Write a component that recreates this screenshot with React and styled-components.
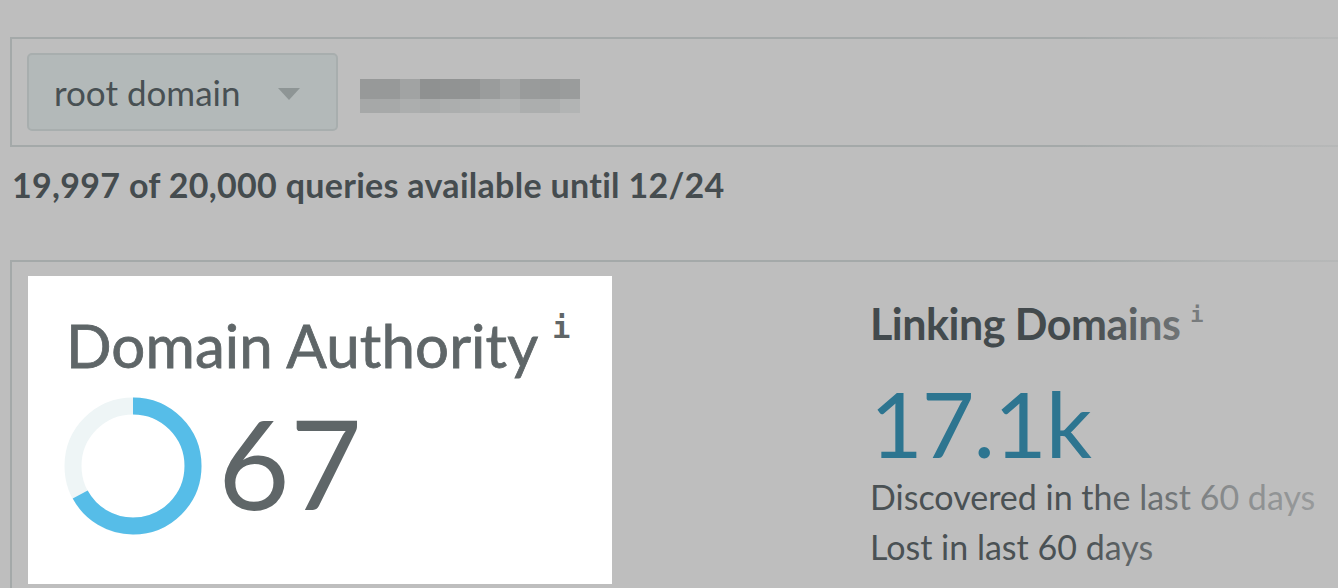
import React from 'react';
import styled, { createGlobalStyle } from 'styled-components';

const GlobalStyle = createGlobalStyle`
  html, body {
    margin: 0;
    padding: 0;
    background: #bebebe;
    overflow: hidden;
  }
  body {
    font-family: Lato, "Open Sans", sans-serif;
    color: #464d50;
  }
`;

const Page = styled.div`
  position: relative;
  width: 1338px;
  height: 588px;
  padding: 37px 0 0 10px;
  box-sizing: border-box;
  overflow: hidden;
`;

const SearchBar = styled.div`
  display: flex;
  align-items: center;
  gap: 22px;
  height: 110px;
  box-sizing: border-box;
  margin-right: -20px;
  padding: 0 15px;
  border: 2px solid #a4a9a9;
`;

const Dropdown = styled.div`
  display: flex;
  align-items: center;
  justify-content: space-between;
  width: 311px;
  height: 78px;
  box-sizing: border-box;
  padding: 0 36px 0 25px;
  background: #b3b9b9;
  border: 2px solid #a8aeae;
  border-radius: 5px;
  font-size: 35px;
  color: #485053;
`;

const Caret = styled.span`
  width: 0;
  height: 0;
  border-left: 11px solid transparent;
  border-right: 11px solid transparent;
  border-top: 12px solid #8e9595;
  margin-top: 4px;
`;

const Redacted = styled.div`
  display: grid;
  grid-template-columns: repeat(11, 20px);
  grid-template-rows: 20px 14px;
  margin-top: 8px;
`;

const Pixel = styled.span`
  background: ${p => p.$c};
`;

const QueryInfo = styled.p`
  margin: 18px 0 0 2px;
  font-size: 34px;
  font-weight: 700;
  letter-spacing: 0.3px;
  color: #454c4f;
  line-height: 40px;
`;

const Metrics = styled.div`
  display: grid;
  grid-template-columns: 584px 1fr;
  align-items: start;
  column-gap: 258px;
  margin-top: 55px;
  margin-right: -20px;
  padding: 14px 0 0 16px;
  height: 400px;
  border-top: 2px solid #a4a9a9;
  border-left: 2px solid #a4a9a9;
`;

const Card = styled.div`
  background: #ffffff;
  height: 308px;
  padding: 37px 0 0 38px;
  box-sizing: border-box;
  color: #5f6668;
`;

const Title = styled.h2`
  margin: 0;
  font-weight: ${p => (p.$bold ? 700 : 400)};
  font-size: ${p => p.$size}px;
  line-height: 1;
  letter-spacing: ${p => (p.$bold ? '-0.5px' : '0.1px')};
  -webkit-text-stroke: ${p => (p.$bold ? '0' : '0.8px')};
  white-space: nowrap;
`;

const Info = styled.sup`
  font-family: "DejaVu Sans Mono", monospace;
  font-weight: 700;
  font-size: ${p => p.$size}px;
  margin-left: ${p => p.$gap}px;
  vertical-align: ${p => p.$lift}px;
  -webkit-text-stroke: 0;
`;

const ScoreRow = styled.div`
  display: flex;
  align-items: center;
  gap: 16px;
  margin-top: 22px;
  margin-left: -2px;
`;

const Score = styled.span`
  font-size: 124px;
  line-height: 1;
  font-weight: 400;
  color: #5f6668;
  margin-top: -8px;
`;

const Side = styled.div`
  padding-top: 26px;
  color: #434a4d;
`;

const BigNumber = styled.div`
  margin-top: 32px;
  font-size: 91px;
  line-height: 1;
  color: #2d7590;
  letter-spacing: -1px;
`;

const Stat = styled.div`
  font-size: 34px;
  line-height: 50px;
  color: #4a5154;
  white-space: nowrap;
`;

const StatList = styled.div`
  margin-top: 4px;
`;

const Fade = styled.div`
  position: absolute;
  inset: 0;
  pointer-events: none;
  background: linear-gradient(
    to right,
    rgba(190, 190, 190, 0) 1080px,
    rgba(190, 190, 190, 0.55) 1230px,
    rgba(190, 190, 190, 0.7) 1338px
  );
`;

const Donut = ({ value }) => {
  const r = 60;
  const c = 2 * Math.PI * r;
  return (
    <svg width="138" height="138" viewBox="0 0 138 138">
      <circle cx="69" cy="69" r={r} fill="none" stroke="#eef5f6" strokeWidth="17" />
      <circle
        cx="69"
        cy="69"
        r={r}
        fill="none"
        stroke="#56bde8"
        strokeWidth="17"
        strokeDasharray={`${(c * value) / 100} ${c}`}
        transform="rotate(-90 69 69)"
      />
    </svg>
  );
};

const blur = [
  ['#979999', '#a6a8a8'], ['#979999', '#a7a9a9'], ['#a1a3a3', '#acaeae'],
  ['#8f9191', '#a9abab'], ['#919393', '#acaeae'], ['#929494', '#aeb0b0'],
  ['#9a9c9c', '#b0b2b2'], ['#a3a5a5', '#b2b4b4'], ['#999b9b', '#acaeae'],
  ['#979999', '#acaeae'], ['#9a9c9c', '#b2b4b4'],
];

export default function App() {
  return (
    <>
      <GlobalStyle />
      <Page>
        <SearchBar>
          <Dropdown>
            root domain
            <Caret />
          </Dropdown>
          <Redacted>
            {blur.map((b, i) => <Pixel key={'t' + i} $c={b[0]} />)}
            {blur.map((b, i) => <Pixel key={'b' + i} $c={b[1]} />)}
          </Redacted>
        </SearchBar>
        <QueryInfo>19,997 of 20,000 queries available until 12/24</QueryInfo>
        <Metrics>
          <Card>
            <Title $size={60}>
              Domain Authority<Info $size={30} $gap={14} $lift={30}>i</Info>
            </Title>
            <ScoreRow>
              <Donut value={67} />
              <Score>67</Score>
            </ScoreRow>
          </Card>
          <Side>
            <Title $bold $size={43}>
              Linking Domains<Info $size={22} $gap={10} $lift={18}>i</Info>
            </Title>
            <BigNumber>17.1k</BigNumber>
            <StatList>
              <Stat>Discovered in the last 60 days</Stat>
              <Stat>Lost in last 60 days</Stat>
            </StatList>
          </Side>
        </Metrics>
        <Fade />
      </Page>
    </>
  );
}
